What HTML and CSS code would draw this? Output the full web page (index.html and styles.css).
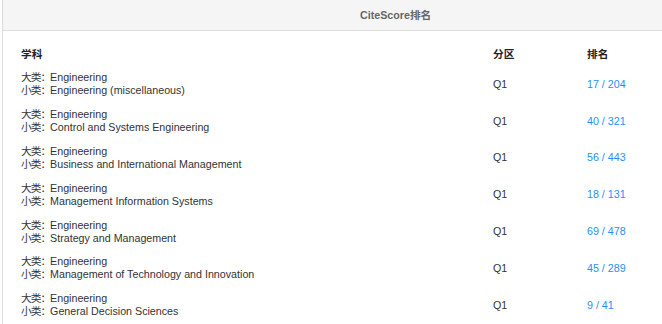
FILE: index.html
```html
<!DOCTYPE html>
<html lang="zh">
<head>
<meta charset="utf-8">
<link rel="stylesheet" href="styles.css">
</head>
<body>
<div class="panel">
  <div class="panel-head">CiteScore排名</div>
  <table class="rank">
    <thead>
      <tr><th class="c-subj">学科</th><th class="c-q">分区</th><th class="c-r">排名</th></tr>
    </thead>
    <tbody>
      <tr><td class="c-subj"><div><span class="lbl">大类：</span>Engineering</div><div><span class="lbl">小类：</span>Engineering (miscellaneous)</div></td><td class="c-q">Q1</td><td class="c-r">17 / 204</td></tr>
      <tr><td class="c-subj"><div><span class="lbl">大类：</span>Engineering</div><div><span class="lbl">小类：</span>Control and Systems Engineering</div></td><td class="c-q">Q1</td><td class="c-r">40 / 321</td></tr>
      <tr><td class="c-subj"><div><span class="lbl">大类：</span>Engineering</div><div><span class="lbl">小类：</span>Business and International Management</div></td><td class="c-q">Q1</td><td class="c-r">56 / 443</td></tr>
      <tr><td class="c-subj"><div><span class="lbl">大类：</span>Engineering</div><div><span class="lbl">小类：</span>Management Information Systems</div></td><td class="c-q">Q1</td><td class="c-r">18 / 131</td></tr>
      <tr><td class="c-subj"><div><span class="lbl">大类：</span>Engineering</div><div><span class="lbl">小类：</span>Strategy and Management</div></td><td class="c-q">Q1</td><td class="c-r">69 / 478</td></tr>
      <tr><td class="c-subj"><div><span class="lbl">大类：</span>Engineering</div><div><span class="lbl">小类：</span>Management of Technology and Innovation</div></td><td class="c-q">Q1</td><td class="c-r">45 / 289</td></tr>
      <tr><td class="c-subj"><div><span class="lbl">大类：</span>Engineering</div><div><span class="lbl">小类：</span>General Decision Sciences</div></td><td class="c-q">Q1</td><td class="c-r">9 / 41</td></tr>
    </tbody>
  </table>
</div>
</body>
</html>
```
FILE: styles.css
```css
html, body {
  margin: 0;
  padding: 0;
  background: #fff;
}
body {
  font-family: "Liberation Sans", Arial, "Noto Sans CJK SC", sans-serif;
  font-size: 10.7px;
  color: #333;
}
.panel {
  margin-left: 2px;
  border-left: 1px solid #ddd;
}
.panel-head {
  height: 30px;
  line-height: 30px;
  background: #f5f5f5;
  border-bottom: 1px solid #ddd;
  color: #666;
  font-weight: bold;
  padding-left: 357px;
}
.rank {
  border-collapse: collapse;
  width: 100%;
}
.rank th {
  font-weight: bold;
  text-align: left;
  color: #222;
  height: 24px;
  padding: 10px 0 1px 0;
  vertical-align: middle;
}
.rank td {
  height: 36.8px;
  padding: 0;
  vertical-align: middle;
  line-height: 13px;
}
.lbl {
  letter-spacing: -1px;
}
.c-subj {
  padding-left: 18px !important;
  width: 472px;
}
.c-q {
  width: 94px;
}
.c-r {
  color: #1e90ff;
}
.rank th.c-r {
  color: #222;
}
```
